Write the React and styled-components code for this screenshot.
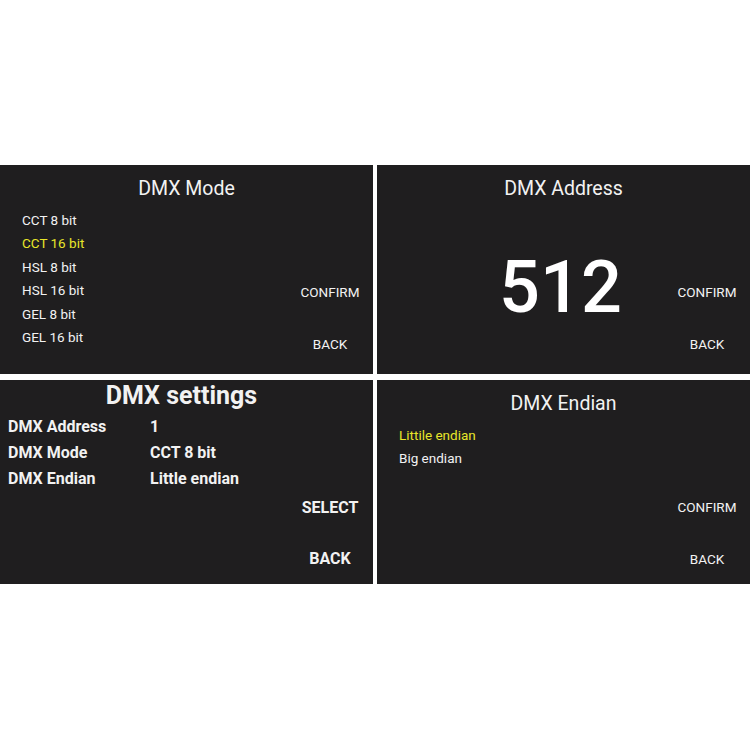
import styled, { createGlobalStyle } from 'styled-components';

const modes = ['CCT 8 bit', 'CCT 16 bit', 'HSL 8 bit', 'HSL 16 bit', 'GEL 8 bit', 'GEL 16 bit'];
const endians = ['Littile endian', 'Big endian'];
const settings = [
    { label: 'DMX Address', value: '1' },
    { label: 'DMX Mode', value: 'CCT 8 bit' },
    { label: 'DMX Endian', value: 'Little endian' },
];

export default function App () {
    return (
        <>
            <GlobalStyle />
            <Screens>
                <Panel>
                    <Title>DMX Mode</Title>
                    <OptionList>
                        {modes.map((mode, index) => (
                            <Option key={mode} $active={index === 1}>{mode}</Option>
                        ))}
                    </OptionList>
                    <Actions>
                        <Action>CONFIRM</Action>
                        <Action>BACK</Action>
                    </Actions>
                </Panel>

                <Panel>
                    <Title>DMX Address</Title>
                    <AddressValue>512</AddressValue>
                    <Actions>
                        <Action>CONFIRM</Action>
                        <Action>BACK</Action>
                    </Actions>
                </Panel>

                <Panel>
                    <Title $big>DMX settings</Title>
                    <SettingsTable>
                        {settings.map((row) => (
                            <SettingRow key={row.label}>
                                <span>{row.label}</span>
                                <span>{row.value}</span>
                            </SettingRow>
                        ))}
                    </SettingsTable>
                    <Actions $big>
                        <Action $big>SELECT</Action>
                        <Action $big>BACK</Action>
                    </Actions>
                </Panel>

                <Panel>
                    <Title>DMX Endian</Title>
                    <OptionList>
                        {endians.map((endian, index) => (
                            <Option key={endian} $active={index === 0}>{endian}</Option>
                        ))}
                    </OptionList>
                    <Actions>
                        <Action>CONFIRM</Action>
                        <Action>BACK</Action>
                    </Actions>
                </Panel>
            </Screens>
        </>
    );
}

const GlobalStyle = createGlobalStyle`
    * {
        box-sizing: border-box;
    }

    body {
        margin: 0;
        background-color: #ffffff;
        font-family: Roboto, 'Liberation Sans', sans-serif;
    }
`;

const Screens = styled.div`
    width: 750px;
    padding-top: 165px;
    display: grid;
    grid-template-columns: 373px 373px;
    grid-template-rows: 209px 204px;
    column-gap: 4px;
    row-gap: 6px;
`;

const Panel = styled.div`
    background-color: #1f1e1f;
    color: #f2f2f2;
    display: grid;
    grid-template-columns: 1fr 86px;
    grid-template-rows: auto 1fr;
    overflow: hidden;
`;

const Title = styled.div`
    grid-column: 1 / -1;
    text-align: center;
    font-size: ${({ $big }) => $big ? '25px' : '19.5px'};
    font-weight: ${({ $big }) => $big ? 700 : 400};
    line-height: ${({ $big }) => $big ? '30px' : '24px'};
    padding-top: ${({ $big }) => $big ? '1px' : '12px'};
    padding-right: ${({ $big }) => $big ? '10px' : '0'};
`;

const OptionList = styled.div`
    display: flex;
    flex-direction: column;
    padding: 8px 0 0 22px;
`;

const Option = styled.div`
    font-size: 13.5px;
    line-height: 23.4px;
    color: ${({ $active }) => $active ? '#e8e62a' : '#f2f2f2'};
`;

const AddressValue = styled.div`
    padding: 51px 0 0 80px;
    text-align: center;
    font-size: 72px;
    font-weight: 500;
    line-height: 72px;
    color: #ffffff;
`;

const SettingsTable = styled.div`
    display: flex;
    flex-direction: column;
    padding: 3px 0 0 8px;
`;

const SettingRow = styled.div`
    display: grid;
    grid-template-columns: 142px 1fr;
    font-size: 16px;
    font-weight: 700;
    line-height: 26px;
`;

const Actions = styled.div`
    grid-column: 2;
    grid-row: 2;
    display: flex;
    flex-direction: column;
    align-items: center;
    padding-top: ${({ $big }) => $big ? '87px' : '81px'};
    gap: ${({ $big }) => $big ? '31px' : '32px'};
`;

const Action = styled.div`
    font-size: ${({ $big }) => $big ? '16px' : '13.5px'};
    font-weight: ${({ $big }) => $big ? 700 : 400};
    line-height: 20px;
`;
